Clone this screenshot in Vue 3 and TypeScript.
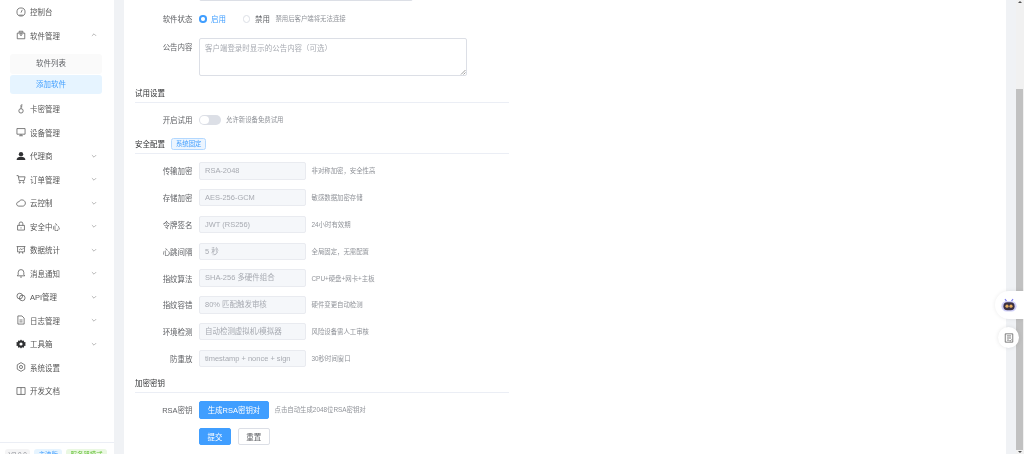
<script setup lang="ts">
import { onMounted, ref } from "vue";

interface MenuItem {
  label: string;
  icon: string;
  arrow?: boolean;
}

const scroller = ref<HTMLElement | null>(null);

const topMenu: MenuItem[] = [{ label: "控制台", icon: "gauge" }];
const restMenu: MenuItem[] = [
  { label: "卡密管理", icon: "key" },
  { label: "设备管理", icon: "monitor" },
  { label: "代理商", icon: "user", arrow: true },
  { label: "订单管理", icon: "cart", arrow: true },
  { label: "云控制", icon: "cloud", arrow: true },
  { label: "安全中心", icon: "lock", arrow: true },
  { label: "数据统计", icon: "chart", arrow: true },
  { label: "消息通知", icon: "bell", arrow: true },
  { label: "API管理", icon: "link", arrow: true },
  { label: "日志管理", icon: "doc", arrow: true },
  { label: "工具箱", icon: "tool", arrow: true },
  { label: "系统设置", icon: "gear" },
  { label: "开发文档", icon: "book" },
];

const fixedRows = [
  { label: "传输加密", value: "RSA-2048", tip: "非对称加密，安全性高" },
  { label: "存储加密", value: "AES-256-GCM", tip: "敏感数据加密存储" },
  { label: "令牌签名", value: "JWT (RS256)", tip: "24小时有效期" },
  { label: "心跳间隔", value: "5 秒", tip: "全局固定，无需配置" },
  { label: "指纹算法", value: "SHA-256 多硬件组合", tip: "CPU+硬盘+网卡+主板" },
  { label: "指纹容错", value: "80% 匹配触发审核", tip: "硬件变更自动检测" },
  { label: "环境检测", value: "自动检测虚拟机/模拟器", tip: "风险设备需人工审核" },
  { label: "防重放", value: "timestamp + nonce + sign", tip: "30秒时间窗口" },
];

onMounted(() => {
  if (scroller.value) scroller.value.scrollTop = scroller.value.scrollHeight;
});
</script>

<template>
  <div class="app">
    <aside class="side">
      <nav class="menu">
        <div v-for="m in topMenu" :key="m.label" class="item">
          <svg class="ico" viewBox="0 0 16 16"><circle cx="8" cy="8" r="6.5" /><path d="M8 9 10 4.500M5 13h6" /></svg>
          <span>{{ m.label }}</span>
        </div>
        <div class="item">
          <svg class="ico" viewBox="0 0 16 16"><path d="M2 5h12v9H2zM5 5V2h6v3M8 3v6M6 7l2 2 2-2" /></svg>
          <span>软件管理</span>
          <svg class="arrow" viewBox="0 0 10 10"><path d="M1.500 6.500 5 3l3.500 3.500" /></svg>
        </div>
        <div class="sub">
          <div class="sub-item">软件列表</div>
          <div class="sub-item active">添加软件</div>
        </div>
        <div v-for="m in restMenu" :key="m.label" class="item">
          <svg class="ico" :class="{ solid: m.icon === 'user' || m.icon === 'tool' }" viewBox="0 0 16 16">
            <template v-if="m.icon === 'key'"><circle cx="8" cy="11" r="3.500" /><path d="M8 7.500V1.500h2.500M8 4.500h2" /></template>
            <template v-else-if="m.icon === 'monitor'"><path d="M1.500 2.500h13v9h-13zM8 11.500v2.500M5 14h6" /></template>
            <template v-else-if="m.icon === 'user'"><circle cx="8" cy="5" r="3.500" /><path d="M1 14.500c0-4 3-5.500 7-5.500s7 1.500 7 5.500z" /></template>
            <template v-else-if="m.icon === 'cart'"><path d="M1 2.500h2.500l1.500 8h8l1.500-6H4" /><circle cx="6" cy="13.500" r="1" /><circle cx="12" cy="13.500" r="1" /></template>
            <template v-else-if="m.icon === 'cloud'"><path d="M4.500 13C2.500 13 1 11.500 1 9.500S2.800 6 4.500 6.200C5.500 4 7.500 3 9.500 3c3 0 5.500 2.500 5.500 5s-1.500 5-4 5z" /></template>
            <template v-else-if="m.icon === 'lock'"><path d="M2.500 7h11v7.500h-11zM5 7V4.500a3 3 0 0 1 6 0V7M8 10v2" /></template>
            <template v-else-if="m.icon === 'chart'"><path d="M1 2.500h14M2.500 2.500v8.500h11V2.500M5 14l1-3M11 14l-1-3M5 8l2.500-2 2 1.500L12 5" /></template>
            <template v-else-if="m.icon === 'bell'"><path d="M2 12.500h12l-1.500-2V7a4.500 4.500 0 0 0-9 0v3.500zM6.500 14.500h3" /></template>
            <template v-else-if="m.icon === 'link'"><circle cx="6" cy="6.500" r="4.500" /><circle cx="10" cy="9.500" r="4.500" /></template>
            <template v-else-if="m.icon === 'doc'"><path d="M3 1.500h6.500l3.500 3.500v9.500H3zM5.500 8h5M5.500 11h5" /></template>
            <template v-else-if="m.icon === 'tool'"><path d="M8 .8l1.800 2 2.600-.6.700 2.600 2.500.9-.8 2.300.8 2.300-2.500.9-.7 2.600-2.600-.6L8 15.200l-1.800-2-2.600.6-.7-2.600-2.500-.9.800-2.300-.8-2.300 2.500-.9.700-2.600 2.600.6zM8 5.500a2.500 2.500 0 1 0 0 5 2.500 2.500 0 0 0 0-5z" /></template>
            <template v-else-if="m.icon === 'gear'"><path d="M8 1l6 3.500v7L8 15l-6-3.500v-7z" /><circle cx="8" cy="8" r="2.500" /></template>
            <template v-else><path d="M1.500 2.500h13v11h-13zM8 2.500v11" /></template>
          </svg>
          <span>{{ m.label }}</span>
          <svg v-if="m.arrow" class="arrow" viewBox="0 0 10 10"><path d="M1.500 3.500 5 7l3.500-3.500" /></svg>
        </div>
      </nav>
      <footer class="side-foot">
        <span class="tag gray">V3.0.0</span>
        <span class="tag blue">主流版</span>
        <span class="tag green">服务器模式</span>
      </footer>
    </aside>

    <main ref="scroller" class="main">
      <section class="card">
        <div class="form">
          <div class="row"><label>软件名称</label><div class="input wide">请输入软件名称</div></div>
          <div class="row"><label>软件版本</label><div class="input wide">1.0.0</div></div>
          <div class="row short"><label>软件状态</label>
            <span class="radio on"></span><span class="radio-text on-text">启用</span>
            <span class="radio off"></span><span class="radio-text">禁用</span>
            <span class="tip">禁用后客户端将无法连接</span>
          </div>
          <div class="row area-row"><label>公告内容</label>
            <div class="area">客户端登录时显示的公告内容（可选）
              <svg class="grip" viewBox="0 0 6 6"><path d="M5.500 1 1 5.500M5.500 3.500 3.500 5.500" /></svg>
            </div>
          </div>

          <h3 class="head head-trial">试用设置</h3>
          <div class="row switch-row"><label>开启试用</label><span class="switch"><i></i></span><span class="tip">允许新设备免费试用</span></div>

          <h3 class="head head-safe">安全配置<span class="fixed-tag">系统固定</span></h3>
          <div v-for="r in fixedRows" :key="r.label" class="row fixed"><label>{{ r.label }}</label><div class="input locked">{{ r.value }}</div><span class="tip">{{ r.tip }}</span></div>

          <h3 class="head head-key">加密密钥</h3>
          <div class="row fixed"><label>RSA密钥</label><button class="btn primary gen">生成RSA密钥对</button><span class="tip">点击自动生成2048位RSA密钥对</span></div>
          <div class="row actions"><label></label><button class="btn primary">提交</button><button class="btn plain">重置</button></div>
        </div>
      </section>
    </main>

    <div class="rail">
      <span class="tri up"></span>
      <span class="thumb"></span>
      <span class="tri down"></span>
    </div>

    <div class="float-bot">
      <svg viewBox="0 0 20 20" width="16" height="16">
        <path d="M5 2.500l2 3M15 2.500l-2 3" stroke="#7c7cf0" stroke-width="1.500" fill="none" />
        <rect x="0.500" y="5" width="19" height="13" rx="6.500" fill="#cfcff8" />
        <rect x="3" y="6.500" width="14" height="10" rx="5" fill="#3a3044" />
        <circle cx="7.500" cy="11.500" r="2" fill="#e8b060" />
        <circle cx="12.500" cy="11.500" r="2" fill="#e8b060" />
      </svg>
    </div>
    <div class="float-note">
      <svg viewBox="0 0 12 12" width="10" height="10"><path d="M1.500 1h9v10h-9zM3.500 3.500h5M3.500 6h5M3.500 8.500h2.500M6.500 9l1 .8L9 7.800" fill="none" stroke="#555" stroke-width=".9" /></svg>
    </div>
  </div>
</template>

<style>
html, body { margin: 0; height: 100%; overflow: hidden; }
</style>

<style scoped>
.app {
  position: relative;
  display: flex;
  height: 454px;
  width: 1024px;
  overflow: hidden;
  background: #f0f2f5;
  font-family: "Liberation Sans", "Noto Sans CJK SC", sans-serif;
  font-size: 7.47px;
  color: #606266;
  filter: blur(0.35px);
}

.side {
  flex: none;
  width: 114px;
  height: 454px;
  background: #fff;
  display: flex;
  flex-direction: column;
}
.menu { flex: 1; }
.item {
  display: flex;
  align-items: center;
  height: 23.5px;
  padding: 0 17px 0 15.500px;
  color: #555;
}
.item span { margin-left: 4.500px; flex: 1; }
.ico {
  width: 10px;
  height: 10px;
  flex: none;
  fill: none;
  stroke: #555;
  stroke-width: 1.200;
}
.ico.solid { fill: #303133; stroke: none; fill-rule: evenodd; }
.arrow {
  width: 6px;
  height: 6px;
  flex: none;
  fill: none;
  stroke: #888;
  stroke-width: 1;
}
.sub { padding: 7.300px 12.500px 1.500px 10px; }
.sub-item {
  height: 19.500px;
  line-height: 19.500px;
  padding-left: 26px;
  margin-bottom: 1px;
  background: #fafafa;
  border-radius: 3px;
  color: #606266;
}
.sub-item.active { background: #e6f4ff; color: #409eff; }
.side-foot {
  flex: none;
  height: 12.500px;
  box-sizing: border-box;
  border-top: 1px solid #ebeef5;
  padding: 6px 0 0 5px;
  display: flex;
  gap: 4px;
  overflow: hidden;
}
.tag {
  height: 12.800px;
  line-height: 12.800px;
  border-radius: 3px;
  padding: 0 4.400px;
  font-size: 6.400px;
  white-space: nowrap;
}
.tag.gray { background: #f4f4f5; color: #909399; padding: 0 3.400px; }
.tag.blue { background: #e6f4ff; color: #409eff; }
.tag.green { background: #eaf8e2; color: #67c23a; }

.main {
  flex: 1;
  min-width: 0;
  height: 454px;
  overflow-y: scroll;
  scrollbar-width: none;
  padding: 0 10px;
  box-sizing: border-box;
}
.rail {
  flex: none;
  width: 8px;
  height: 454px;
  background: #f1f1f1;
  display: flex;
  flex-direction: column;
  justify-content: space-between;
  align-items: center;
  padding: 1px 0;
  box-sizing: border-box;
  position: relative;
}
.thumb {
  width: 7px;
  margin-right: 1px;
  height: 361px;
  margin-top: auto;
  margin-bottom: 1px;
  background: #c1c1c1;
}
.tri { width: 0; height: 0; border-left: 2.500px solid transparent; border-right: 2.500px solid transparent; }
.up { border-bottom: 2.500px solid #505050; }
.down { border-top: 2.500px solid #505050; }
.card {
  background: #fff;
  height: 558px;
  padding: 0 11px;
  box-sizing: border-box;
  overflow: hidden;
}
.form { width: 374px; }
.row { display: flex; align-items: center; }
.row label {
  flex: none;
  width: 57.500px;
  margin-right: 6.500px;
  text-align: right;
  color: #606266;
}
.input {
  box-sizing: border-box;
  height: 17.500px;
  line-height: 15.500px;
  padding: 0 5px;
  border: 1px solid #dcdfe6;
  border-radius: 2px;
  color: #a8abb2;
  white-space: nowrap;
  overflow: hidden;
}
.row:nth-child(1) { margin-top: 60.500px; }
.row:nth-child(1), .row:nth-child(2) { height: 17.500px; margin-bottom: 9.300px; }
.input.wide { width: 214px; }
.input.locked {
  width: 107px;
  background: #f5f7fa;
  border-color: #e9ebf0;
}
.short { height: 17.500px; margin-bottom: 10.300px; }
.radio {
  box-sizing: border-box;
  width: 7.500px;
  height: 7.500px;
  border-radius: 50%;
  flex: none;
}
.radio.on { border: 2.500px solid #409eff; background: #fff; }
.radio.off { border: 1px solid #dcdfe6; margin-left: 17px; }
.radio-text { margin-left: 4.500px; color: #606266; }
.on-text { color: #409eff; }
.tip { margin-left: 5.500px; font-size: 6.400px; color: #909399; white-space: nowrap; }
.area-row { align-items: flex-start; }
.area-row label { margin-top: 3px; }
.area {
  position: relative;
  box-sizing: border-box;
  width: 268px;
  height: 38.500px;
  border: 1px solid #dcdfe6;
  border-radius: 2px;
  padding: 3px 5px;
  color: #a8abb2;
}
.grip {
  position: absolute;
  right: 0;
  bottom: 0;
  width: 6px;
  height: 6px;
  stroke: #777;
  stroke-width: .7;
}
.head {
  margin: 0;
  display: flex;
  align-items: center;
  font-size: 7.470px;
  font-weight: 400;
  color: #303133;
  border-bottom: 1px solid #ebeef5;
  height: 17px;
  padding-bottom: 1px;
}
.head-trial { margin-top: 8px; }
.head-safe { margin-top: 6.750px; }
.head-key { margin-top: 7px; }
.fixed-tag {
  margin-left: 6px;
  height: 11.500px;
  line-height: 10px;
  box-sizing: border-box;
  padding: 0 4px;
  font-size: 6.400px;
  color: #409eff;
  background: #ecf5ff;
  border: 1px solid #b3d8ff;
  border-radius: 2.500px;
}
.switch-row { height: 17.500px; margin-top: 7.750px; }
.switch {
  position: relative;
  flex: none;
  width: 21.500px;
  height: 10.500px;
  background: #dcdfe6;
  border-radius: 6px;
}
.switch i {
  position: absolute;
  left: 1px;
  top: 1px;
  width: 8.500px;
  height: 8.500px;
  border-radius: 50%;
  background: #fff;
}
.fixed { height: 17.500px; margin-top: 9.300px; }
.head + .fixed { margin-top: 7.800px; }
.actions { height: 17.500px; margin-top: 9.300px; }
.btn {
  height: 17.500px;
  box-sizing: border-box;
  border-radius: 2px;
  border: 1px solid #dcdfe6;
  font: inherit;
  padding: 0;
}
.primary { background: #409eff; border-color: #409eff; color: #fff; width: 32px; }
.gen { width: 70px; }
.plain { background: #fff; color: #606266; width: 32.500px; margin-left: 6.500px; }

.float-bot {
  position: absolute;
  left: 994.700px;
  right: 0;
  top: 291px;
  height: 27.500px;
  display: flex;
  align-items: center;
  justify-content: center;
  background: #fff;
  border-radius: 14px 0 0 14px;
  box-shadow: 0 0 4px rgba(0, 0, 0, 0.08);
}
.float-note {
  position: absolute;
  left: 998px;
  top: 327px;
  width: 21px;
  height: 21px;
  border-radius: 50%;
  background: #fff;
  box-shadow: 0 0 4px rgba(0, 0, 0, 0.1);
  display: flex;
  align-items: center;
  justify-content: center;
}
</style>
